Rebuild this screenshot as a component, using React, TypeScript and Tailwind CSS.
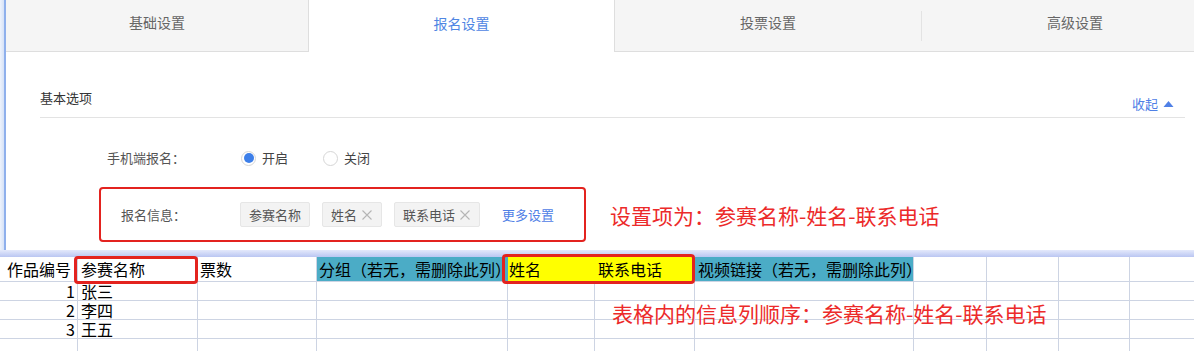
import React from "react";

const cols = [78, 120, 119, 191, 87, 100, 219, 73, 72, 71, 80];

type HeadCell = { text?: string; bg?: string; border?: string; pl?: string };

const head: HeadCell[] = [
  { text: "作品编号", pl: "pl-[7px]" },
  { text: "参赛名称", pl: "pl-[3px]" },
  { text: "票数", pl: "pl-[2px]" },
  { text: "分组（若无，需删除此列）", bg: "bg-[#4bacc6]", border: "border-r-[#4bacc6]", pl: "pl-[2px]" },
  { text: "姓名", bg: "bg-[#ffff00]", border: "border-r-[#ffff00]", pl: "pl-[1px]" },
  { text: "联系电话", bg: "bg-[#ffff00]", pl: "pl-[3px]" },
  { text: "视频链接（若无，需删除此列）", bg: "bg-[#4bacc6]", pl: "pl-[3px]" },
  {},
  {},
  {},
  {},
];

const rows = [
  ["1", "张三"],
  ["2", "李四"],
  ["3", "王五"],
  ["", ""],
];

function Tag({ text, closable }: { text: string; closable?: boolean }) {
  return (
    <div className="flex h-[25px] items-center gap-[3px] rounded-[2px] border border-[#e6e6e6] bg-[#f3f3f3] px-[8px] text-[13px] leading-[18px] text-[#555]">
      <span>{text}</span>
      {closable && (
        <svg width="12" height="12" viewBox="0 0 12 12" className="ml-[1px]">
          <path d="M1.5 1.5 L10.5 10.5 M10.5 1.5 L1.5 10.5" stroke="#b5b5b5" strokeWidth="1.1" />
        </svg>
      )}
    </div>
  );
}

export default function App() {
  return (
    <div className="relative h-[351px] w-[1194px] overflow-hidden bg-white font-['Noto_Sans_CJK_SC','Microsoft_YaHei',sans-serif]">
      {/* settings panel */}
      <div className="flex h-[250px]">
        <div className="w-[6px] shrink-0 border-r-2 border-[#8fb0ec] bg-gradient-to-r from-[#eef3fc] to-[#d6e2f7]" />
        <div className="min-w-0 flex-1 overflow-hidden">
          {/* tabs */}
          <div className="flex h-[52px] w-[1230px] text-[14px] text-[#666]">
            <div className="flex w-[303px] items-center justify-center border-b border-r border-[#dedede] bg-[#f5f5f5] pb-[6px]">
              基础设置
            </div>
            <div className="flex w-[305px] items-center justify-center bg-white pb-[6px] text-[#4f86e3]">
              报名设置
            </div>
            <div className="flex flex-1 items-center border-b border-l border-[#dedede] bg-[#f5f5f5]">
              <div className="flex w-[306px] items-center justify-center pb-[6px]">投票设置</div>
              <div className="h-[30px] w-px bg-[#e3e3e3]" />
              <div className="flex w-[306px] items-center justify-center pb-[6px]">高级设置</div>
            </div>
          </div>

          {/* section header */}
          <div className="ml-[34px] mr-[9px] mt-[37px] flex h-[29px] justify-between border-b border-[#e3e3e3]">
            <div className="text-[13px] leading-[18px] text-[#333]">基本选项</div>
            <div className="mb-[4px] mt-auto flex items-center gap-[5px] text-[13px] leading-[18px] text-[#4f80e6]">
              <span>收起</span>
              <svg width="11" height="8" viewBox="0 0 11 8">
                <path d="M5.5 1 L10.5 7 L0.5 7 Z" fill="#4f80e6" />
              </svg>
              <span className="w-[6px]" />
            </div>
          </div>

          {/* mobile signup */}
          <div className="ml-[101px] mt-[31px] flex h-[18px] items-center text-[13px] leading-[18px] text-[#555]">
            <div className="w-[134px]">手机端报名：</div>
            <div className="flex items-center">
              <span className="flex h-[15px] w-[15px] items-center justify-center rounded-full border border-[#d6d6d6] bg-white">
                <span className="h-[10px] w-[10px] rounded-full bg-[#3d7fe9]" />
              </span>
              <span className="ml-[6px] text-[#444]">开启</span>
            </div>
            <div className="ml-[35px] flex items-center">
              <span className="h-[15px] w-[15px] rounded-full border border-[#d6d6d6] bg-white" />
              <span className="ml-[6px] text-[#444]">关闭</span>
            </div>
          </div>

          {/* signup info */}
          <div className="ml-[93px] mt-[20px] flex items-center">
            <div className="flex h-[55px] w-[487px] items-center rounded-[4px] border-2 border-[#e3231f] pl-[20px]">
              <div className="w-[119px] text-[13px] leading-[18px] text-[#555]">报名信息：</div>
              <div className="flex items-center gap-[12px]">
                <Tag text="参赛名称" />
                <Tag text="姓名" closable />
                <Tag text="联系电话" closable />
                <span className="ml-[10px] text-[13px] leading-[18px] text-[#4f80e6]">更多设置</span>
              </div>
            </div>
            <div className="ml-[24px] text-[21px] leading-[28px] text-[#ec2a2a]">
              设置项为：参赛名称-姓名-联系电话
            </div>
          </div>
        </div>
      </div>

      {/* divider band */}
      <div className="h-[7px] bg-gradient-to-b from-[#e4e9fb] to-[#bac6f2]" />

      {/* spreadsheet */}
      <div className="text-[16px] text-black">
        <div className="flex h-[25px]">
          {head.map((c, i) => (
            <div
              key={i}
              style={{ width: cols[i] }}
              className={`flex h-[25px] shrink-0 items-center whitespace-nowrap border-b border-r border-[#cdd4e3] leading-[20px] ${c.bg ?? ""} ${c.border ?? ""} ${c.pl ?? ""}`}
            >
              {c.text}
            </div>
          ))}
        </div>
        {rows.map((r, ri) => (
          <div key={ri} className="flex h-[19px]">
            {cols.map((w, ci) => (
              <div
                key={ci}
                style={{ width: w }}
                className={`flex h-[19px] shrink-0 items-center whitespace-nowrap border-b border-r border-[#cdd4e3] leading-[18px] ${
                  ci === 0 ? "justify-end pr-[2px]" : "pl-[3px]"
                }`}
              >
                {ci === 0 ? r[0] : ci === 1 ? r[1] : ""}
              </div>
            ))}
          </div>
        ))}
      </div>

      {/* annotation overlays */}
      <div className="absolute left-[74px] top-[256px] h-[28px] w-[124px] rounded-[4px] border-[3px] border-[#e3231f]" />
      <div className="absolute left-[502px] top-[254px] h-[30px] w-[193px] rounded-[4px] border-[3px] border-[#e3231f]" />
      <div className="absolute left-[612px] top-[299px] whitespace-nowrap text-[21px] leading-[28px] text-[#ec2a2a]">
        表格内的信息列顺序：参赛名称-姓名-联系电话
      </div>
    </div>
  );
}
